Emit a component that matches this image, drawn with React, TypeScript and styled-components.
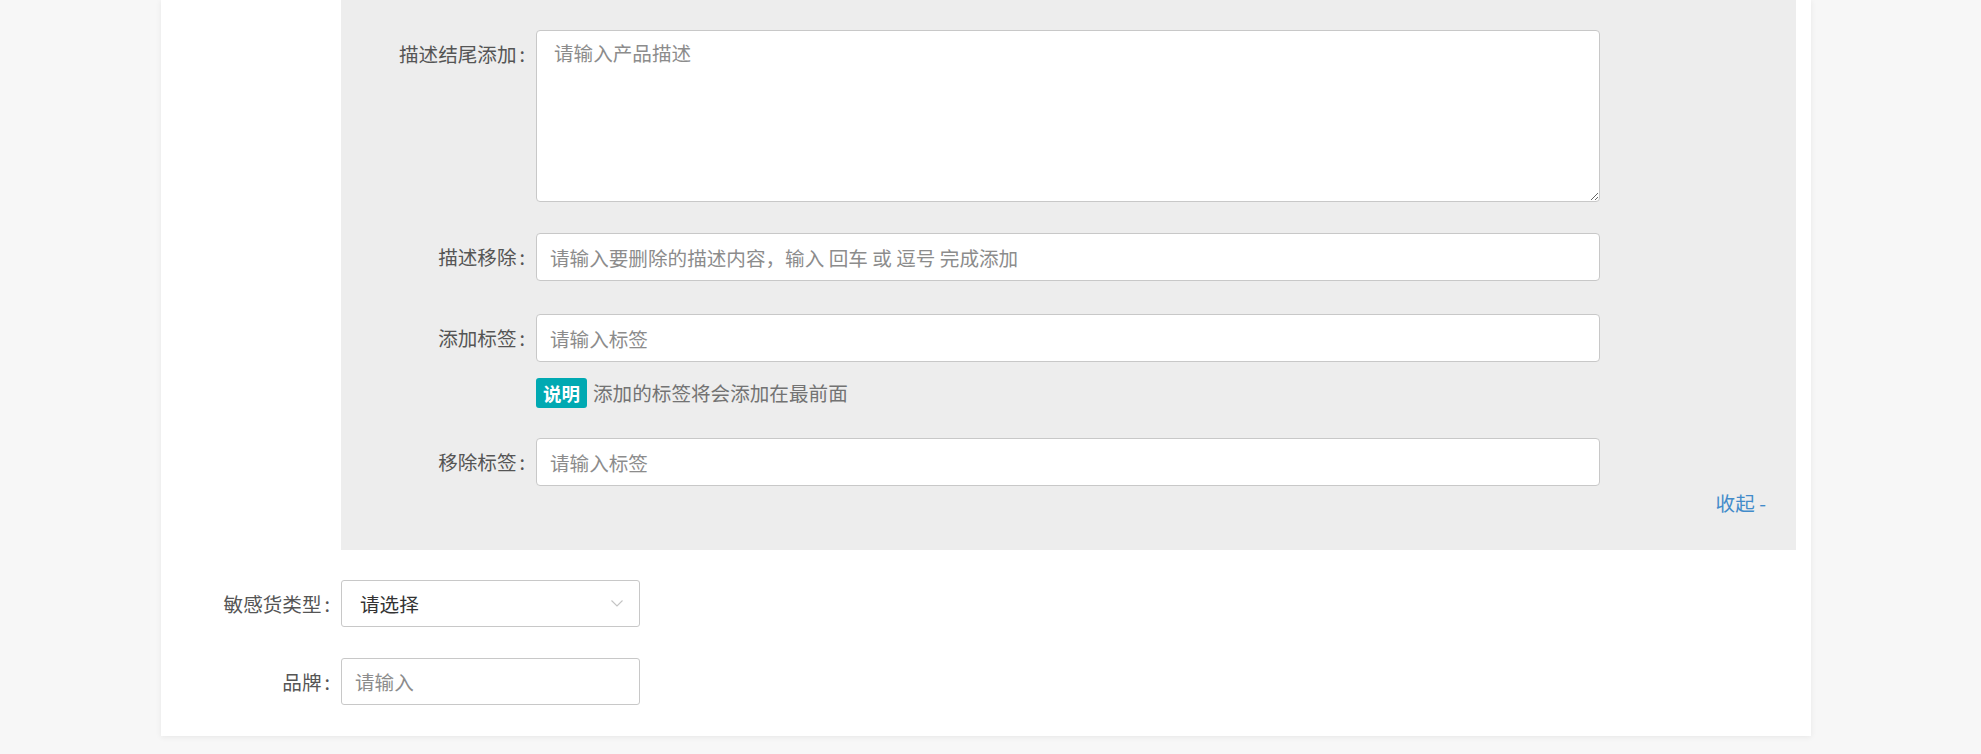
import styled, { createGlobalStyle } from "styled-components";

const GlobalStyle = createGlobalStyle`
    html,
    body {
        margin: 0;
        background: #f7f7f7;
    }
    body {
        font-family: "Noto Sans CJK SC", "Noto Sans", sans-serif;
        font-size: 19.6px;
        color: #555;
    }
    * {
        box-sizing: border-box;
    }
`;

const panelFields = [
    { label: "描述移除", placeholder: "请输入要删除的描述内容，输入 回车 或 逗号 完成添加", gap: 33 },
    { label: "添加标签", placeholder: "请输入标签", gap: 30, help: "添加的标签将会添加在最前面" },
    { label: "移除标签", placeholder: "请输入标签", gap: 0 },
];

const App = () => {
    return (
        <>
            <GlobalStyle />
            <Card>
                <Panel>
                    <PanelRow $mb={31}>
                        <Label>
                            描述结尾添加<Colon>:</Colon>
                        </Label>
                        <TextArea placeholder="请输入产品描述" />
                    </PanelRow>
                    {panelFields.map((f) => (
                        <PanelRow key={f.label} $mb={f.gap}>
                            <Label>
                                {f.label}
                                <Colon>:</Colon>
                            </Label>
                            <Field>
                                <Input placeholder={f.placeholder} />
                                {f.help && (
                                    <Help>
                                        <Badge>说明</Badge>
                                        {f.help}
                                    </Help>
                                )}
                            </Field>
                        </PanelRow>
                    ))}
                    <Collapse>
                        <a>收起 -</a>
                    </Collapse>
                </Panel>
                <BaseRow $mb={31}>
                    <Label>
                        敏感货类型<Colon>:</Colon>
                    </Label>
                    <Select>
                        <span>请选择</span>
                        <svg width="12" height="7" viewBox="0 0 12 7">
                            <polyline points="0.5,0.5 6,6 11.5,0.5" fill="none" stroke="#c4c4c4" strokeWidth="1.1" />
                        </svg>
                    </Select>
                </BaseRow>
                <BaseRow $mb={0}>
                    <Label>
                        品牌<Colon>:</Colon>
                    </Label>
                    <SmallInput placeholder="请输入" />
                </BaseRow>
            </Card>
        </>
    );
};

const Card = styled.div`
    width: 1650px;
    margin: 0 0 18px 161px;
    padding: 0 15px 31px 0;
    background: #fff;
    box-shadow: 0 1px 6px rgba(0, 0, 0, 0.07);
`;

const Panel = styled.div`
    margin-left: 180px;
    padding: 30px 0 36px;
    background: #ededed;
    margin-bottom: 30px;
`;

const PanelRow = styled.div<{ $mb: number }>`
    display: grid;
    grid-template-columns: 184px 1064px;
    column-gap: 11px;
    align-items: start;
    margin-bottom: ${(p) => p.$mb}px;
`;

const BaseRow = styled.div<{ $mb: number }>`
    display: grid;
    grid-template-columns: 169px 299px;
    column-gap: 11px;
    align-items: start;
    margin-bottom: ${(p) => p.$mb}px;
`;

const Label = styled.label`
    text-align: right;
    line-height: 47px;
    white-space: nowrap;
    color: #555;
`;

const Colon = styled.span`
    margin-left: 3px;
`;

const Field = styled.div`
    display: flex;
    flex-direction: column;
`;

const TextArea = styled.textarea`
    width: 100%;
    height: 172px;
    padding: 8px 17px;
    border: 1px solid #c8c8c8;
    border-radius: 4px;
    background: #fff;
    font: inherit;
    line-height: 28px;
    color: #555;
    resize: vertical;
    outline: none;
    &::placeholder {
        color: #8c8c8c;
    }
`;

const Input = styled.input`
    width: 100%;
    height: 48px;
    padding: 0 13px;
    border: 1px solid #c8c8c8;
    border-radius: 4px;
    background: #fff;
    font: inherit;
    color: #555;
    outline: none;
    &::placeholder {
        color: #8c8c8c;
    }
`;

const SmallInput = styled(Input)`
    height: 47px;
    border-radius: 3px;
`;

const Help = styled.div`
    display: flex;
    align-items: center;
    gap: 6px;
    margin-top: 16px;
    color: #737373;
    line-height: 30px;
`;

const Badge = styled.span`
    display: inline-flex;
    align-items: center;
    height: 30px;
    padding: 0 7px;
    border-radius: 3px;
    background: #00a9b2;
    color: #fff;
    font-size: 18.5px;
    font-weight: 700;
`;

const Collapse = styled.div`
    margin-top: 6px;
    padding-right: 30px;
    text-align: right;
    line-height: 22px;
    a {
        color: #428bca;
        cursor: pointer;
    }
`;

const Select = styled.div`
    display: flex;
    align-items: center;
    justify-content: space-between;
    height: 47px;
    padding: 0 16px 0 18px;
    border: 1px solid #c8c8c8;
    border-radius: 3px;
    background: #fff;
    color: #333;
    svg {
        display: block;
    }
`;

export default App;
